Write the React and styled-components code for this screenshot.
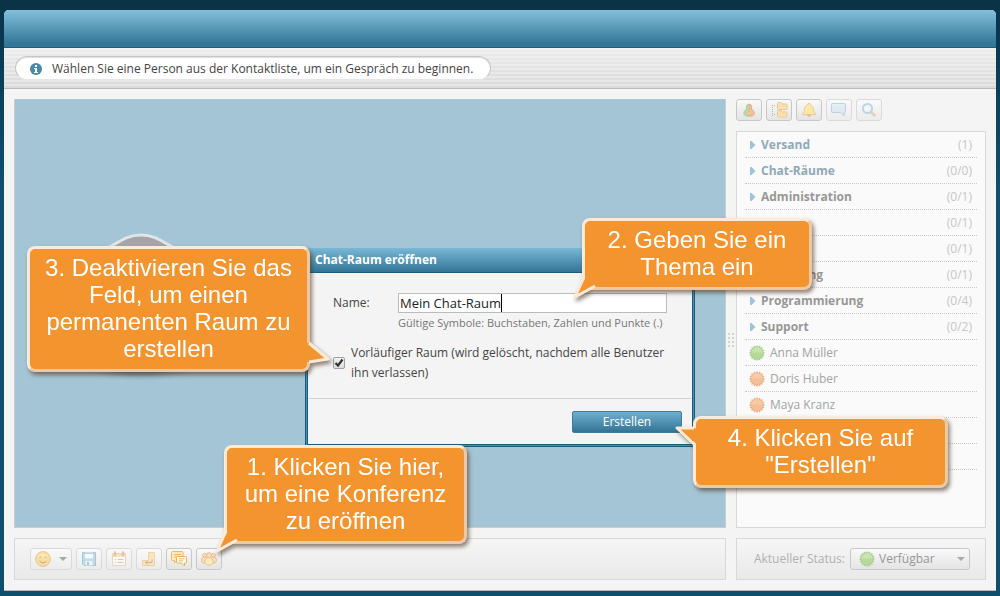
import React from "react";
import styled, { createGlobalStyle } from "styled-components";

const groups = [
    { name: "Versand", count: "(1)", special: true },
    { name: "Chat-Räume", count: "(0/0)", special: true },
    { name: "Administration", count: "(0/1)" },
    { name: "", count: "(0/1)" },
    { name: "", count: "(0/1)" },
    { name: "Marketing", count: "(0/1)" },
    { name: "Programmierung", count: "(0/4)" },
    { name: "Support", count: "(0/2)" },
];

const people = [
    { name: "Anna Müller", status: "online" },
    { name: "Doris Huber", status: "away" },
    { name: "Maya Kranz", status: "away" },
    { name: "", status: "away" },
    { name: "", status: "away" },
];

const burst = Array.from({ length: 32 }, (_, i) => {
    const r = i % 2 ? 6.4 : 8;
    const a = (i * Math.PI) / 16;
    return `${(8 + r * Math.sin(a)).toFixed(2)},${(8 - r * Math.cos(a)).toFixed(2)}`;
}).join(" ");

function StatusIcon({ status }) {
    const online = status === "online";
    return (
        <svg width="16" height="16" viewBox="0 0 16 16" aria-hidden="true">
            <polygon points={burst} fill={online ? "#a8cf8c" : "#edb088"} />
            <circle cx="8" cy="8" r="5.8" fill={online ? "#b6da9b" : "#f4bf9b"} />
            <path d="M2.4 7.6a5.6 5.6 0 0 1 11.2 0z" fill={online ? "#c7e3ae" : "#f7cba6"} />
        </svg>
    );
}

function PersonIcon() {
    return (
        <svg width="16" height="16" viewBox="0 0 16 16" aria-hidden="true">
            <path d="M8 2.2c1.600 0 2.700 1.200 2.700 2.700 0 1-.3 1.600-.8 2.200 2 .6 3.200 2.200 3.200 4.100 0 2-1.500 3-5.100 3s-5.100-1-5.100-3c0-1.900 1.200-3.500 3.200-4.100-.5-.6-.8-1.200-.8-2.200 0-1.500 1.100-2.700 2.700-2.700z" fill="#bcdaa6" stroke="#a2c48d" strokeWidth=".8" />
            <path d="M8.500 2.300c1.400.2 2.200 1.300 2.200 2.600 0 1-.3 1.600-.8 2.200 2 .6 3.200 2.200 3.200 4.100 0 1.600-1 2.600-3 2.900-1-1.500-.2-3-1.500-4.300s.8-4-.1-7.500z" fill="#f6c19d" stroke="#eba981" strokeWidth=".8" />
            <circle cx="8" cy="11.200" r="1.900" fill="#f8c9a6" stroke="#eba981" strokeWidth=".5" />
        </svg>
    );
}

function GroupsIcon() {
    return (
        <svg width="18" height="16" viewBox="0 0 18 16" aria-hidden="true">
            <path d="M2.500 3v12M4 3.500h2M4 12.500h2" stroke="#b5b5b5" strokeDasharray="1 1" fill="none" />
            <path d="M7.500 1.500q0-1 1-1h2.500l1 1.500h4q1 0 1 1v3.500q0 1-1 1h-7.500q-1 0-1-1z" fill="#fbe3b3" stroke="#ecc699" />
            <path d="M7.500 9.500q0-1 1-1h2.500l1 1.500h4q1 0 1 1v3q0 1-1 1h-7.500q-1 0-1-1z" fill="#fbe3b3" stroke="#ecc699" />
            <path d="M8 4h8.500M8 12h8.500" stroke="#f8d79f" />
        </svg>
    );
}

function BellIcon() {
    return (
        <svg width="16" height="16" viewBox="0 0 16 16" aria-hidden="true">
            <circle cx="8" cy="13.200" r="1.600" fill="#e9b98a" />
            <path d="M8 1.300c.9 0 1.300.7 1.300 1.400 2.100.7 2.900 2.400 3 4.500.1 2.200.6 3.300 2.200 4.500v.9h-13v-.9c1.600-1.200 2.100-2.300 2.200-4.500.1-2.100.9-3.800 3-4.500 0-.7.4-1.400 1.300-1.400z" fill="#fde89f" stroke="#ecc294" strokeWidth=".9" />
            <path d="M6.300 5c-.8 1-.8 2.400-1 4.500" stroke="#fff7cf" fill="none" />
        </svg>
    );
}

function BubbleIcon() {
    return (
        <svg width="16" height="16" viewBox="0 0 16 16" aria-hidden="true">
            <path d="M1.500 1.500h12q1 0 1 1v7q0 1-1 1h-.3v3.500l-3.700-3.500h-8q-1 0-1-1v-7q0-1 1-1z" fill="#d9e9f1" stroke="#aacde0" />
            <path d="M2 3h11.500" stroke="#eef5f9" />
        </svg>
    );
}

function SearchIcon() {
    return (
        <svg width="16" height="16" viewBox="0 0 16 16" aria-hidden="true">
            <path d="M9.500 9.500l4 4" stroke="#e8c8b0" strokeWidth="2.800" strokeLinecap="round" />
            <circle cx="6.500" cy="6.500" r="4.600" fill="#f0f6fa" stroke="#aecde0" strokeWidth="2" />
        </svg>
    );
}

function SmileyIcon() {
    return (
        <svg width="16" height="16" viewBox="0 0 16 16" aria-hidden="true">
            <circle cx="8" cy="8" r="7.400" fill="#fbd990" stroke="#e6b77c" />
            <path d="M2.500 6a6 5 0 0 1 11 0q-5.500 2-11 0z" fill="#fde6aa" />
            <path d="M4.500 6.500q1-1.500 2 0M9.500 6.500q1-1.500 2 0M4.500 10.200q3.500 3.200 7 0" stroke="#c58f5a" fill="none" />
        </svg>
    );
}

function SaveIcon() {
    return (
        <svg width="16" height="16" viewBox="0 0 16 16" aria-hidden="true">
            <path d="M1.500 1.500h13v13h-11.500l-1.500-1.500z" fill="#b4d7e7" stroke="#94bdd2" />
            <path d="M4 1.500h8v6h-8z" fill="#f8fbfc" />
            <path d="M4 2.500h8" stroke="#9fc9dd" />
            <path d="M4.500 10h7v4.500h-7z" fill="#eef4f6" />
            <path d="M6 11h2v3h-2z" fill="#98bfd2" />
        </svg>
    );
}

function CalendarIcon() {
    return (
        <svg width="16" height="16" viewBox="0 0 16 16" aria-hidden="true">
            <path d="M1.500 2.500h13v12h-13z" fill="#fdfbf8" stroke="#e8cdb4" />
            <path d="M2 3h12v3h-12z" fill="#f7dcb4" />
            <path d="M4 1.500v2.500M12 1.500v2.500" stroke="#e2b594" strokeWidth="2.400" strokeLinecap="round" />
            <path d="M4 8.500h1M6.500 8.500h6M4 11.500h1M6.500 11.500h6" stroke="#c9bdb2" />
        </svg>
    );
}

function EnterIcon() {
    return (
        <svg width="16" height="16" viewBox="0 0 16 16" aria-hidden="true">
            <path d="M7.500 1.500h6v13h-12v-5h6z" fill="#fbe3ae" stroke="#ebc999" />
            <path d="M11 8.500v3h-6M6.500 9.800l-2 1.700 2 1.700" stroke="#c4a27c" fill="none" />
        </svg>
    );
}

function ChatIcon() {
    return (
        <svg width="16" height="16" viewBox="0 0 16 16" aria-hidden="true">
            <path d="M1.500.500h9.500q1 0 1 1v7q0 1-1 1h-5l-2.500 2.500v-2.500h-2q-1 0-1-1v-7q0-1 1-1z" fill="#fceabf" stroke="#efb968" />
            <path d="M3 3.500h7M3 6h4" stroke="#efb968" />
            <path d="M6.500 5.500h8q1 0 1 1v4.500q0 1-1 1h-1v3l-3-3h-4q-1 0-1-1v-4.500q0-1 1-1z" fill="#fffaf0" stroke="#eeb05a" />
            <path d="M8 7.800h5.500M8 9.800h4" stroke="#efb968" />
        </svg>
    );
}

function ConferenceIcon() {
    return (
        <svg width="16" height="16" viewBox="0 0 16 16" aria-hidden="true">
            <g fill="#f8dfb6" stroke="#e2b88f" strokeWidth=".8">
                <circle cx="3.600" cy="4.400" r="2" />
                <circle cx="12.400" cy="4.400" r="2" />
                <path d="M.5 9c0-1.800 1.200-2.800 2.900-2.800s2.900 1.200 2.900 3l-1 2.800h-2.400c-1.600 0-2.400-1.200-2.400-3zM15.500 9c0-1.800-1.200-2.800-2.900-2.800s-2.900 1.200-2.900 3l1 2.800h2.400c1.600 0 2.400-1.200 2.400-3z" />
                <circle cx="8" cy="4.200" r="2.600" />
                <path d="M3.800 10.800c0-2.600 1.600-4.200 4.200-4.200s4.200 1.600 4.200 4.200c0 2.200-1.800 3.400-4.200 3.400s-4.200-1.200-4.200-3.400z" fill="#fbe8bb" />
            </g>
        </svg>
    );
}

function InfoIcon() {
    return (
        <svg width="12" height="12" viewBox="0 0 12 12" aria-hidden="true">
            <circle cx="6" cy="6" r="6" fill="#4689ab" />
            <path d="M5 2h2v2h-2zM4 5h3v4h1v1h-4v-1h1v-3h-1z" fill="#fff" />
        </svg>
    );
}

// tails are drawn over the bubble border so that the fill runs through it
const tails = {
    bottomLeft: { fill: "M11 0L2 20L22 9V4H12Z", line: "M11 0L2 20L22 9" },
    right: { fill: "M2 2L21 18L2 21H0V2Z", line: "M2 2L21 18L2 21" },
    left: { fill: "M24 21L3 4L20 4L24 5Z", line: "M21 21L3 4L20 4" },
};

function Note({ className, tail, children }) {
    return (
        <NoteBox className={className}>
            {children}
            <Tail $side={tail} width="24" height="24" aria-hidden="true">
                <path d={tails[tail].fill} fill="#f4942e" />
                <path d={tails[tail].line} fill="none" stroke="#fdebd8" strokeWidth="3" strokeLinejoin="round" />
            </Tail>
        </NoteBox>
    );
}

export default function App() {
    return (
        <Page>
            <GlobalStyle />
            <Window>
                <Header />
                <InfoBar>
                    <InfoPill>
                        <InfoIcon />
                        Wählen Sie eine Person aus der Kontaktliste, um ein Gespräch zu beginnen.
                    </InfoPill>
                </InfoBar>
                <Content>
                    <ChatColumn>
                        <ChatArea>
                            <Emblem width="132" height="154" viewBox="0 0 132 154" aria-hidden="true">
                                <defs>
                                    <radialGradient id="emblemShade">
                                        <stop offset="0.4" stopColor="#7c9cac" />
                                        <stop offset="1" stopColor="#a4c5d6" stopOpacity="0" />
                                    </radialGradient>
                                    <linearGradient id="emblemFill" x2="0" y2="1">
                                        <stop offset="0" stopColor="#a3a3a5" />
                                        <stop offset="1" stopColor="#c9c9cc" />
                                    </linearGradient>
                                </defs>
                                <ellipse cx="66" cy="138" rx="64" ry="13" fill="url(#emblemShade)" />
                                <path d="M20 24C44 12 50 4 66 4S88 12 112 24V120H20Z" fill="url(#emblemFill)" stroke="#e2e5e8" strokeWidth="3" />
                            </Emblem>
                        </ChatArea>
                        <Toolbar>
                            <ToolButton $wide $faded aria-label="Smileys">
                                <SmileyIcon />
                                <Caret />
                            </ToolButton>
                            <ToolButton $faded aria-label="Speichern"><SaveIcon /></ToolButton>
                            <ToolButton $faded aria-label="Kalender"><CalendarIcon /></ToolButton>
                            <ToolButton $faded aria-label="Eingabetaste"><EnterIcon /></ToolButton>
                            <ToolButton aria-label="Chat"><ChatIcon /></ToolButton>
                            <ToolButton aria-label="Konferenz"><ConferenceIcon /></ToolButton>
                        </Toolbar>
                    </ChatColumn>
                    <Grip>
                        {Array.from({ length: 8 }, (_, i) => <i key={i} />)}
                    </Grip>
                    <Sidebar>
                        <SideTools>
                            <ToolButton aria-label="Kontakte"><PersonIcon /></ToolButton>
                            <ToolButton aria-label="Gruppen"><GroupsIcon /></ToolButton>
                            <ToolButton aria-label="Ton"><BellIcon /></ToolButton>
                            <ToolButton $faded aria-label="Nachrichten"><BubbleIcon /></ToolButton>
                            <ToolButton $faded aria-label="Suche"><SearchIcon /></ToolButton>
                        </SideTools>
                        <ContactList>
                            {groups.map((g, i) => (
                                <Group key={i} $special={g.special}>
                                    <svg width="6" height="8" viewBox="0 0 6 8" aria-hidden="true">
                                        <path d="M0 0H1.500L5.500 4L1.500 8H0Z" fill="#9cc4dc" />
                                    </svg>
                                    <b>{g.name}</b>
                                    <span>{g.count}</span>
                                </Group>
                            ))}
                            {people.map((p, i) => (
                                <Person key={i}>
                                    <StatusIcon status={p.status} />
                                    {p.name}
                                </Person>
                            ))}
                        </ContactList>
                        <StatusBar>
                            <label htmlFor="status">Aktueller Status:</label>
                            <StatusField>
                                <StatusIcon status="online" />
                                <select id="status" defaultValue="on">
                                    <option value="on">Verfügbar</option>
                                </select>
                                <Caret />
                            </StatusField>
                        </StatusBar>
                    </Sidebar>
                </Content>
            </Window>

            <Dialog role="dialog" aria-labelledby="dialog-title">
                <DialogInner>
                    <h2 id="dialog-title">Chat-Raum eröffnen</h2>
                    <Form>
                        <label htmlFor="room">Name:</label>
                        <NameField>
                            <input id="room" type="text" defaultValue="Mein Chat-Raum" />
                            <TextCursor />
                            <small>Gültige Symbole: Buchstaben, Zahlen und Punkte (.)</small>
                        </NameField>
                    </Form>
                    <CheckRow>
                        <CheckBox>
                            <input id="temporary" type="checkbox" defaultChecked />
                            <svg width="12" height="12" viewBox="0 0 12 12" aria-hidden="true">
                                <path d="M2.500 6L5 8.500L9.500 2.500" stroke="#333" strokeWidth="2.200" fill="none" />
                            </svg>
                        </CheckBox>
                        <label htmlFor="temporary">
                            Vorläufiger Raum (wird gelöscht, nachdem alle Benutzer ihn verlassen)
                        </label>
                    </CheckRow>
                    <DialogFooter>
                        <button type="button">Erstellen</button>
                    </DialogFooter>
                </DialogInner>
            </Dialog>

            <NoteOne tail="bottomLeft">1. Klicken Sie hier, um eine Konferenz zu eröffnen</NoteOne>
            <NoteTwo tail="bottomLeft">2. Geben Sie ein Thema ein</NoteTwo>
            <NoteThree tail="right">3. Deaktivieren Sie das Feld, um einen permanenten Raum zu erstellen</NoteThree>
            <NoteFour tail="left">4. Klicken Sie auf "Erstellen"</NoteFour>
        </Page>
    );
}

const GlobalStyle = createGlobalStyle`
    * {
        box-sizing: border-box;
    }

    body {
        margin: 0;
        font: 12px/16px "Open Sans", "Noto Sans", sans-serif;
        color: #444;
    }

    button, input, select {
        font: inherit;
        color: inherit;
        margin: 0;
    }
`;

const Page = styled.div`
    position: relative;
    display: flex;
    min-height: 100vh;
    padding: 10px 4px 5px;
    background: linear-gradient(#0a3247, #0d4f6d 30%, #0d4f6d);
`;

const Window = styled.div`
    display: flex;
    flex-direction: column;
    flex: 1;
    background: #f4f4f4;
    border-bottom: 1px solid #bbb;
    border-radius: 5px 5px 0 0;
`;

const Header = styled.header`
    height: 38px;
    border-bottom: 1px solid #1d5f82;
    border-radius: 5px 5px 0 0;
    background: linear-gradient(#84c0dc, #347799 90%);
`;

const InfoBar = styled.div`
    display: flex;
    padding: 8px 11px;
    border-bottom: 1px solid #bbb;
    background:
        repeating-linear-gradient(rgba(255, 255, 255, 0.3) 0 2px, transparent 2px 4px),
        linear-gradient(#ececec, #dadada);
`;

const InfoPill = styled.div`
    display: flex;
    align-items: center;
    gap: 10px;
    height: 24px;
    padding: 2px 17px 0 14px;
    border: 1px solid #c6c6c6;
    border-bottom-color: #e6e6e6;
    border-radius: 12px;
    background: #fff;
    box-shadow: inset 0 1px 1px #ddd;
`;

const Content = styled.main`
    display: flex;
    flex: 1;
    padding: 10px;
`;

const ChatColumn = styled.section`
    display: flex;
    flex-direction: column;
    flex: 1;
    gap: 10px;
`;

const ChatArea = styled.div`
    flex: 1;
    padding: 132px 0 0 60px;
    border: 1px solid #ccc;
    border-top: 0;
    background: #a4c5d6;
`;

const Emblem = styled.svg`
    display: block;
`;

const Bar = styled.div`
    display: flex;
    align-items: center;
    height: 42px;
    padding: 0 15px;
    border: 1px solid #d8d8d8;
    background: linear-gradient(#f6f6f6, #e9e9e9);
`;

const Toolbar = styled(Bar)`
    gap: 4px;
`;

const ToolButton = styled.button`
    display: flex;
    align-items: center;
    justify-content: ${(p) => (p.$wide ? "space-between" : "center")};
    width: ${(p) => (p.$wide ? "42px" : "26px")};
    height: 22px;
    padding: ${(p) => (p.$wide ? "0 4px" : "0")};
    border: 1px solid ${(p) => (p.$faded ? "#dadada" : "#c8c8c8")};
    border-radius: 3px;
    background: linear-gradient(#f9f9f9, ${(p) => (p.$faded ? "#ececec" : "#e4e4e4")});

    svg {
        flex: none;
        opacity: ${(p) => (p.$faded ? 0.8 : 1)};
    }
`;

const Caret = styled.span`
    border: 4px solid transparent;
    border-top-color: #aaa;
    border-bottom: 0;
`;

const Grip = styled.div`
    display: grid;
    grid-template-columns: 2px 2px;
    grid-auto-rows: 2px;
    align-content: center;
    justify-content: center;
    gap: 2px;
    width: 10px;

    i {
        background: #d3d3d3;
    }
`;

const Sidebar = styled.aside`
    display: flex;
    flex-direction: column;
    gap: 10px;
    width: 250px;
`;

const SideTools = styled.div`
    display: flex;
    gap: 4px;
`;

const ContactList = styled.ul`
    flex: 1;
    margin: 0;
    padding: 0 8px;
    list-style: none;
    border: 1px solid #d8d8d8;
    background: #fafafa;
`;

const Row = styled.li`
    display: flex;
    align-items: center;
    height: 26px;
    border-bottom: 1px dotted #c8c8c8;
    color: #a3a3a3;
`;

const Group = styled(Row)`
    gap: 5px;
    padding: 0 5px;

    b {
        flex: 1;
        color: ${(p) => (p.$special ? "#8fa9b7" : "#979797")};
    }

    span {
        color: #c6c6c6;
    }
`;

const Person = styled(Row)`
    gap: 5px;
    padding: 0 4px;
`;

const StatusBar = styled(Bar)`
    justify-content: flex-end;
    gap: 5px;
    color: #b0b0b0;
`;

const StatusField = styled.div`
    display: flex;
    align-items: center;
    width: 120px;
    height: 22px;
    padding: 0 4px 0 8px;
    border: 1px solid #c8c8c8;
    border-radius: 3px;
    background: linear-gradient(#f9f9f9, #e4e4e4);
    color: #979797;

    select {
        flex: 1;
        min-width: 0;
        padding: 0 4px;
        border: 0;
        background: none;
        appearance: none;
    }
`;

const Dialog = styled.section`
    position: absolute;
    top: 248px;
    left: calc(50% - 195px);
    width: 390px;
    padding: 1px;
    border: 1px solid #1c5c7b;
    background: #4790b3;
`;

const DialogInner = styled.div`
    border: 1px solid #1c5c7b;
    background: #f4f4f4;

    h2 {
        margin: -3px -1px 0;
        padding: 3px 8px;
        border-bottom: 1px solid #1c5c7b;
        background: linear-gradient(#79b8d6, #337496);
        color: #fff;
        font-size: 12px;
        line-height: 18px;
    }
`;

const Form = styled.div`
    display: flex;
    padding: 20px 25px 0;

    label {
        width: 65px;
        line-height: 20px;
    }
`;

const NameField = styled.div`
    position: relative;
    flex: 1;

    input {
        display: block;
        width: 269px;
        height: 20px;
        padding: 0 1px;
        border: 1px solid #bbb;
        background: #fff;
        color: #222;
        font-size: 13px;
    }

    small {
        display: block;
        font-size: 11px;
        line-height: 20px;
        color: #777;
    }
`;

const TextCursor = styled.i`
    position: absolute;
    top: 1px;
    left: 103px;
    width: 1px;
    height: 18px;
    background: #000;
`;

const CheckRow = styled.div`
    display: flex;
    align-items: center;
    gap: 6px;
    padding: 10px 25px 15px;

    label {
        line-height: 20px;
    }
`;

const CheckBox = styled.span`
    display: grid;

    input, svg {
        grid-area: 1 / 1;
    }

    input {
        width: 12px;
        height: 12px;
        border: 1px solid #a0a0a0;
        border-radius: 2px;
        background: linear-gradient(#f2f2f2, #ddd);
        appearance: none;
    }

    svg {
        pointer-events: none;
        visibility: hidden;
    }

    input:checked + svg {
        visibility: visible;
    }
`;

const DialogFooter = styled.div`
    display: flex;
    justify-content: flex-end;
    margin: 0 1px;
    padding: 12px 9px 11px;
    border-top: 1px solid #d0d0d0;

    button {
        width: 110px;
        height: 22px;
        padding: 0;
        border: 1px solid #3c7c9c;
        border-radius: 2px;
        background: linear-gradient(#6fb0cf, #337496);
        color: #fff;
    }
`;

const NoteBox = styled.div`
    position: absolute;
    padding: 5px 12px 7px;
    border: 3px solid;
    border-color: #fdebd8 #ecc9a4 #ecc9a4 #fdebd8;
    border-radius: 8px;
    background: #f4942e;
    color: #fff;
    font: 24px/27px "Liberation Sans", Arial, sans-serif;
    text-align: center;
    filter: drop-shadow(2px 3px 2px rgba(70, 50, 30, 0.6));
`;

const Tail = styled.svg`
    position: absolute;
    ${(p) => p.$side === "bottomLeft" && "left: -12px; bottom: -14px;"}
    ${(p) => p.$side === "right" && "right: -24px; bottom: 4px;"}
    ${(p) => p.$side === "left" && "left: -22px; top: 5px;"}
`;

const NoteOne = styled(Note)`
    top: 445px;
    left: 224px;
    width: 243px;
`;

const NoteTwo = styled(Note)`
    top: 218px;
    left: 582px;
    width: 230px;
`;

const NoteThree = styled(Note)`
    top: 246px;
    left: 27px;
    width: 283px;
`;

const NoteFour = styled(Note)`
    top: 416px;
    left: 693px;
    width: 255px;
`;
